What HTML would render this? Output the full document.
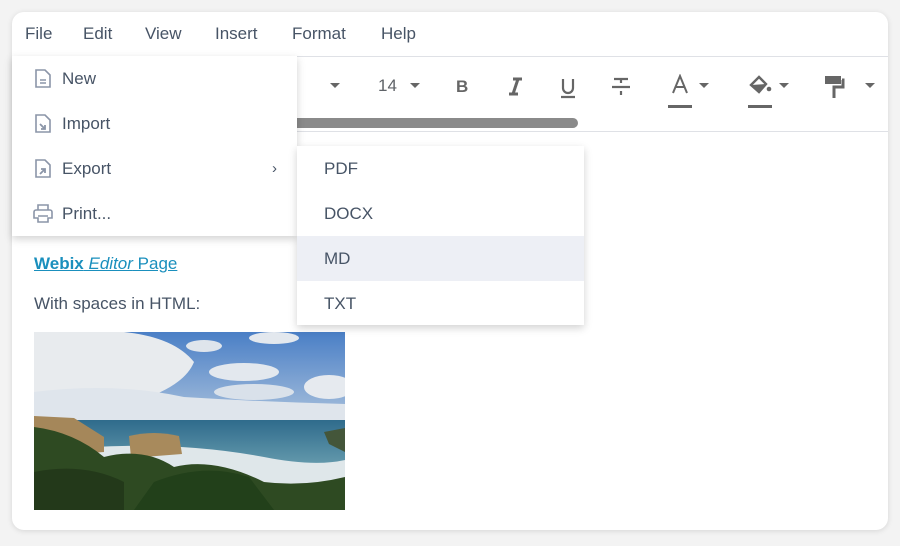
<!DOCTYPE html>
<html><head><meta charset="utf-8"><style>
body{margin:0;width:900px;height:546px;background:#f3f3f3;font-family:"Liberation Sans",Roboto,sans-serif;position:relative;overflow:hidden;color:#475466}
.card{position:absolute;left:12px;top:12px;width:876px;height:518px;background:#fff;border-radius:12px;box-shadow:0 1px 6px rgba(0,0,0,.12);overflow:hidden}
.a{position:absolute}
.menubar span{position:absolute;top:12px;font-size:17px;color:#475466}
.hline{position:absolute;left:0;right:0;height:1px;background:#dfe1e6}
.caret{position:absolute;width:0;height:0;border-left:5px solid transparent;border-right:5px solid transparent;border-top:5px solid #666}
.dd{position:absolute;background:#fff;box-shadow:0 3px 8px rgba(0,0,0,.18)}
.item{position:absolute;left:0;right:0;height:45px;font-size:17px;line-height:45px;color:#475466}
</style></head><body>
<div class="card">
 <div class="menubar"><span style="left:13px">File</span><span style="left:71px">Edit</span><span style="left:133px">View</span><span style="left:203px">Insert</span><span style="left:280px">Format</span><span style="left:369px">Help</span></div>
 <div class="hline" style="top:44px"></div>
 <div class="caret" style="left:318px;top:71px"></div>
 <div class="a" style="left:366px;top:64px;font-size:17px;color:#5f6368">14</div>
 <div class="caret" style="left:398px;top:71px"></div>
 <svg class="a" style="left:440px;top:62px" width="200" height="26" viewBox="0 0 200 26">
  <text x="4" y="18" font-family="Liberation Sans" font-weight="bold" font-size="17" fill="#666">B</text>
  <path d="M61 5H70M57 20H66M66 5L61 20" stroke="#666" stroke-width="3" fill="none"/>
  <path d="M111 5V14A5 5 0 0 0 121 14V5" stroke="#666" stroke-width="2.2" fill="none"/>
  <path d="M109 23H123" stroke="#666" stroke-width="2.2"/>
  <path d="M162 5H176M169 5V9M160 13H178M169 17V21" stroke="#666" stroke-width="2.2" fill="none"/>
 </svg>
 <svg class="a" style="left:656px;top:62px" width="26" height="36" viewBox="0 0 26 36"><path d="M5 19L12 2L19 19M8 13H16" stroke="#666" stroke-width="2" fill="none"/><rect x="0" y="31" width="24" height="3" fill="#666"/></svg>
 <div class="caret" style="left:687px;top:71px"></div>
 <svg class="a" style="left:736px;top:62px" width="26" height="36" viewBox="0 0 26 36"><path d="M3 11 L11 3 L18 10 L11 18 Z" fill="none" stroke="#666" stroke-width="2.4"/><path d="M3 11 L18 10 L11 18Z" fill="#666"/><circle cx="21" cy="15" r="2.3" fill="#666"/><rect x="0" y="31" width="24" height="3" fill="#666"/></svg>
 <div class="caret" style="left:767px;top:71px"></div>
 <svg class="a" style="left:813px;top:64px" width="20" height="24" viewBox="0 0 20 24"><rect x="0" y="0" width="16" height="8" fill="#666"/><path d="M17 4 H18 V11 H9 V22" fill="none" stroke="#666" stroke-width="3"/></svg>
 <div class="caret" style="left:853px;top:71px"></div>
 <div class="a" style="left:270px;top:106px;width:296px;height:10px;border-radius:5px;background:#8a8a8a"></div>
 <div class="hline" style="top:119px"></div>
 <div class="a" style="left:22px;top:242px;font-size:17px;color:#1a8fbd;text-decoration:underline"><b>Webix</b> <i>Editor</i> Page</div>
 <div class="a" style="left:22px;top:282px;font-size:17px;color:#475466">With spaces in HTML:</div>
 <svg class="a" style="left:22px;top:320px" width="311" height="178" viewBox="0 0 311 178">
  <defs><linearGradient id="sk" x1="0" y1="0" x2="0" y2="1"><stop offset="0" stop-color="#4a7fc6"/><stop offset="1" stop-color="#a8c0dc"/></linearGradient>
  <linearGradient id="se" x1="0" y1="0" x2="0" y2="1"><stop offset="0" stop-color="#2f6b8c"/><stop offset="1" stop-color="#6a9fb0"/></linearGradient></defs>
  <rect width="311" height="88" fill="url(#sk)"/>
  <path d="M0 0H90Q140 5 160 30Q150 55 100 70Q60 78 0 76Z" fill="#e8ebee"/>
  <path d="M0 60Q80 50 150 65Q230 70 311 72V88H0Z" fill="#dfe5ec"/>
  <ellipse cx="210" cy="40" rx="35" ry="9" fill="#e3e8ee"/><ellipse cx="220" cy="60" rx="40" ry="8" fill="#d9e1ea"/>
  <ellipse cx="295" cy="55" rx="25" ry="12" fill="#e6eaef"/><ellipse cx="240" cy="6" rx="25" ry="6" fill="#e3e8ee"/>
  <ellipse cx="170" cy="14" rx="18" ry="6" fill="#dfe5ec"/>
  <rect y="88" width="311" height="50" fill="url(#se)"/>
  <path d="M60 115Q150 110 230 125Q280 135 311 128V160H60Z" fill="#dfe7ea"/>
  <path d="M0 84L40 86L70 105L70 120L0 125Z" fill="#a5875a"/>
  <path d="M95 104Q120 98 145 104L148 122L97 126Z" fill="#a88a5c"/>
  <path d="M290 100L311 96V120L295 112Z" fill="#44563a"/>
  <path d="M0 95Q40 100 70 125Q110 115 140 135Q180 125 230 150Q270 155 311 145V178H0Z" fill="#2e4a22"/>
  <path d="M120 150Q170 130 215 145L240 178H100Z" fill="#22401a"/>
  <path d="M0 140Q50 130 90 150V178H0Z" fill="#23391a"/>
 </svg>
</div>
<div class="dd" style="left:12px;top:56px;width:285px;height:180px">
 <div class="item" style="top:0"><svg class="a" style="left:23px;top:13px" width="16" height="19"><path d="M1 1H10L15 6V18H1Z" fill="none" stroke="#8b95a8" stroke-width="1.6"/><path d="M5 11H11M5 14H11" stroke="#8b95a8" stroke-width="1.5"/></svg><span style="position:absolute;left:50px">New</span></div>
 <div class="item" style="top:45px"><svg class="a" style="left:23px;top:13px" width="16" height="19"><path d="M1 1H10L15 6V18H1Z" fill="none" stroke="#8b95a8" stroke-width="1.6"/><path d="M5 10L10 15M6 15H10V11" stroke="#8b95a8" stroke-width="1.8" fill="none"/></svg><span style="position:absolute;left:50px">Import</span></div>
 <div class="item" style="top:90px"><svg class="a" style="left:23px;top:13px" width="16" height="19"><path d="M1 1H10L15 6V18H1Z" fill="none" stroke="#8b95a8" stroke-width="1.6"/><path d="M5 15L10 10M6 10H10V14" stroke="#8b95a8" stroke-width="1.8" fill="none"/></svg><span style="position:absolute;left:50px">Export</span><span style="position:absolute;left:260px;font-size:15px">›</span></div>
 <div class="item" style="top:135px"><svg class="a" style="left:21px;top:13px" width="20" height="19"><path d="M5 6V1H15V6M3 6H17A2 2 0 0 1 19 8V14H15V18H5V14H1V8A2 2 0 0 1 3 6ZM5 12H15" fill="none" stroke="#8b95a8" stroke-width="1.6"/></svg><span style="position:absolute;left:50px">Print...</span></div>
</div>
<div class="dd" style="left:297px;top:146px;width:287px;height:179px">
 <div class="item" style="top:0"><span style="position:absolute;left:27px">PDF</span></div>
 <div class="item" style="top:45px"><span style="position:absolute;left:27px">DOCX</span></div>
 <div class="item" style="top:90px;background:#edeff5"><span style="position:absolute;left:27px">MD</span></div>
 <div class="item" style="top:135px"><span style="position:absolute;left:27px">TXT</span></div>
</div>
</body></html>
